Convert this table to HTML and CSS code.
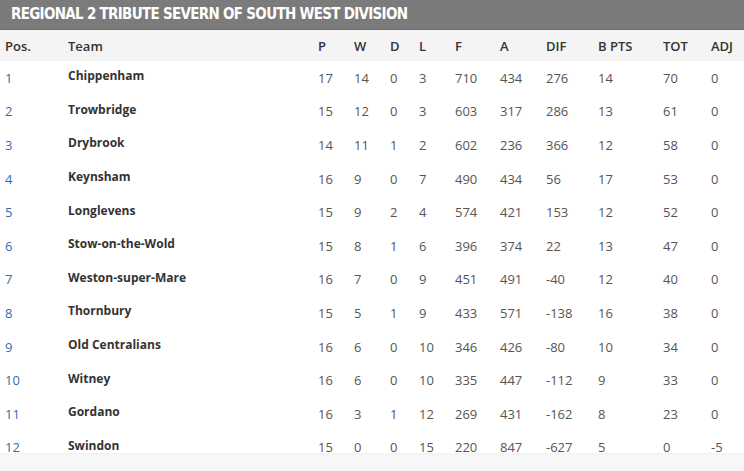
FILE: index.html
```html
<!DOCTYPE html>
<html>
<head>
<meta charset="utf-8">
<link rel="stylesheet" href="styles.css">
</head>
<body>
<div class="league">
  <h1 class="title">REGIONAL 2 TRIBUTE SEVERN OF SOUTH WEST DIVISION</h1>
  <div class="table">
    <div class="row head">
      <span>Pos.</span><span>Team</span><span>P</span><span>W</span><span>D</span><span>L</span><span>F</span><span>A</span><span>DIF</span><span>B PTS</span><span>TOT</span><span>ADJ</span>
    </div>
    <div class="row"><span class="pos">1</span><span class="team">Chippenham</span><span>17</span><span>14</span><span>0</span><span>3</span><span>710</span><span>434</span><span>276</span><span>14</span><span>70</span><span>0</span></div>
    <div class="row"><span class="pos">2</span><span class="team">Trowbridge</span><span>15</span><span>12</span><span>0</span><span>3</span><span>603</span><span>317</span><span>286</span><span>13</span><span>61</span><span>0</span></div>
    <div class="row"><span class="pos">3</span><span class="team">Drybrook</span><span>14</span><span>11</span><span>1</span><span>2</span><span>602</span><span>236</span><span>366</span><span>12</span><span>58</span><span>0</span></div>
    <div class="row"><span class="pos">4</span><span class="team">Keynsham</span><span>16</span><span>9</span><span>0</span><span>7</span><span>490</span><span>434</span><span>56</span><span>17</span><span>53</span><span>0</span></div>
    <div class="row"><span class="pos">5</span><span class="team">Longlevens</span><span>15</span><span>9</span><span>2</span><span>4</span><span>574</span><span>421</span><span>153</span><span>12</span><span>52</span><span>0</span></div>
    <div class="row"><span class="pos">6</span><span class="team">Stow-on-the-Wold</span><span>15</span><span>8</span><span>1</span><span>6</span><span>396</span><span>374</span><span>22</span><span>13</span><span>47</span><span>0</span></div>
    <div class="row"><span class="pos">7</span><span class="team">Weston-super-Mare</span><span>16</span><span>7</span><span>0</span><span>9</span><span>451</span><span>491</span><span>-40</span><span>12</span><span>40</span><span>0</span></div>
    <div class="row"><span class="pos">8</span><span class="team">Thornbury</span><span>15</span><span>5</span><span>1</span><span>9</span><span>433</span><span>571</span><span>-138</span><span>16</span><span>38</span><span>0</span></div>
    <div class="row"><span class="pos">9</span><span class="team">Old Centralians</span><span>16</span><span>6</span><span>0</span><span>10</span><span>346</span><span>426</span><span>-80</span><span>10</span><span>34</span><span>0</span></div>
    <div class="row"><span class="pos">10</span><span class="team">Witney</span><span>16</span><span>6</span><span>0</span><span>10</span><span>335</span><span>447</span><span>-112</span><span>9</span><span>33</span><span>0</span></div>
    <div class="row"><span class="pos">11</span><span class="team">Gordano</span><span>16</span><span>3</span><span>1</span><span>12</span><span>269</span><span>431</span><span>-162</span><span>8</span><span>23</span><span>0</span></div>
    <div class="row last"><span class="pos">12</span><span class="team">Swindon</span><span>15</span><span>0</span><span>0</span><span>15</span><span>220</span><span>847</span><span>-627</span><span>5</span><span>0</span><span>-5</span></div>
  </div>
  <div class="footer"></div>
</div>
</body>
</html>
```

FILE: styles.css
```css
html, body {
  margin: 0;
  padding: 0;
  background: #ffffff;
}
body {
  font-family: "Open Sans", "Noto Sans", sans-serif;
  width: 744px;
  height: 471px;
  overflow: hidden;
}
.title {
  margin: 0;
  height: 30px;
  box-sizing: border-box;
  background: #7b7b7b;
  border-bottom: 1px solid #6c6c6c;
  color: #ffffff;
  font-family: "DejaVu Sans Condensed", "DejaVu Sans", sans-serif;
  font-stretch: condensed;
  font-size: 15px;
  font-weight: 700;
  letter-spacing: -0.7px;
  line-height: 29px;
  padding-left: 11px;
  white-space: nowrap;
}
.table {
  display: flex;
  flex-direction: column;
}
.row {
  display: grid;
  grid-template-columns: 63px 250px 36px 36px 29px 36px 45px 46px 52px 65px 48px 33px;
  padding-left: 5px;
  height: 33.6px;
  align-items: center;
  font-size: 13px;
  color: #555555;
}
.row.head {
  height: 31px;
  background: #f4f4f4;
  color: #333333;
  font-weight: 600;
  font-size: 13px;
}
.row.last {
  background: linear-gradient(#ffffff 0, #ffffff 22px, #f0f0f0 22px, #f7f7f7 24px, #f7f7f7 100%);
}
.pos {
  color: #2f6db3;
}
.team {
  color: #333333;
  font-weight: 700;
  font-size: 12px;
  padding-bottom: 4px;
}
.footer {
  height: 20px;
  background: #f7f7f7;
}
```
